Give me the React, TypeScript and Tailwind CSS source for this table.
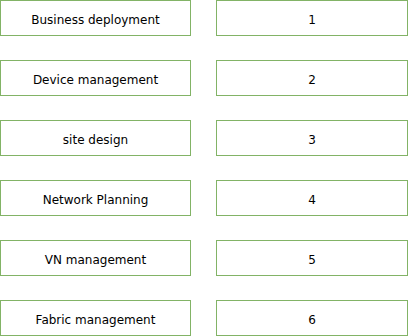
const rows: [string, string][] = [
  ["Business deployment", "1"],
  ["Device management", "2"],
  ["site design", "3"],
  ["Network Planning", "4"],
  ["VN management", "5"],
  ["Fabric management", "6"],
];

function Cell({ label }: { label: string }) {
  return (
    <div className="flex h-9 items-center justify-center border border-[#82b366] bg-white pt-1 text-[12px] text-black">
      {label}
    </div>
  );
}

export default function App() {
  return (
    <div
      className="grid w-[408px] grid-cols-[191px_192px] gap-x-[25px] gap-y-6 bg-white"
      style={{ fontFamily: '"DejaVu Sans", Verdana, sans-serif' }}
    >
      {rows.map(([name, step]) => (
        <div key={step} className="contents">
          <Cell label={name} />
          <Cell label={step} />
        </div>
      ))}
    </div>
  );
}
